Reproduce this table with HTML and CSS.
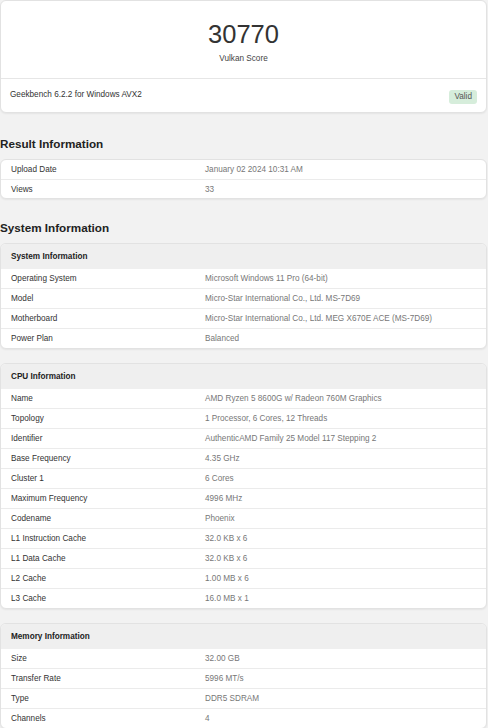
FILE: index.html
```html
<!DOCTYPE html>
<html lang="en">
<head>
<meta charset="utf-8">
<title>Geekbench Vulkan Score</title>
<link rel="stylesheet" href="styles.css">
</head>
<body>
<div class="page">
  <div class="card score-card">
    <div class="score-main">
      <div class="score">30770</div>
      <div class="score-label">Vulkan Score</div>
    </div>
    <div class="score-foot">
      <span>Geekbench 6.2.2 for Windows AVX2</span>
      <span class="badge">Valid</span>
    </div>
  </div>

  <h2 class="section-title first">Result Information</h2>
  <div class="card compact">
    <div class="row"><span class="k">Upload Date</span><span class="v">January 02 2024 10:31 AM</span></div>
    <div class="row"><span class="k">Views</span><span class="v">33</span></div>
  </div>

  <h2 class="section-title">System Information</h2>
  <div class="card">
    <div class="card-head">System Information</div>
    <div class="row"><span class="k">Operating System</span><span class="v">Microsoft Windows 11 Pro (64-bit)</span></div>
    <div class="row"><span class="k">Model</span><span class="v">Micro-Star International Co., Ltd. MS-7D69</span></div>
    <div class="row"><span class="k">Motherboard</span><span class="v">Micro-Star International Co., Ltd. MEG X670E ACE (MS-7D69)</span></div>
    <div class="row"><span class="k">Power Plan</span><span class="v">Balanced</span></div>
  </div>

  <div class="card gap">
    <div class="card-head">CPU Information</div>
    <div class="row"><span class="k">Name</span><span class="v">AMD Ryzen 5 8600G w/ Radeon 760M Graphics</span></div>
    <div class="row"><span class="k">Topology</span><span class="v">1 Processor, 6 Cores, 12 Threads</span></div>
    <div class="row"><span class="k">Identifier</span><span class="v">AuthenticAMD Family 25 Model 117 Stepping 2</span></div>
    <div class="row"><span class="k">Base Frequency</span><span class="v">4.35 GHz</span></div>
    <div class="row"><span class="k">Cluster 1</span><span class="v">6 Cores</span></div>
    <div class="row"><span class="k">Maximum Frequency</span><span class="v">4996 MHz</span></div>
    <div class="row"><span class="k">Codename</span><span class="v">Phoenix</span></div>
    <div class="row"><span class="k">L1 Instruction Cache</span><span class="v">32.0 KB x 6</span></div>
    <div class="row"><span class="k">L1 Data Cache</span><span class="v">32.0 KB x 6</span></div>
    <div class="row"><span class="k">L2 Cache</span><span class="v">1.00 MB x 6</span></div>
    <div class="row"><span class="k">L3 Cache</span><span class="v">16.0 MB x 1</span></div>
  </div>

  <div class="card gap">
    <div class="card-head">Memory Information</div>
    <div class="row"><span class="k">Size</span><span class="v">32.00 GB</span></div>
    <div class="row"><span class="k">Transfer Rate</span><span class="v">5996 MT/s</span></div>
    <div class="row"><span class="k">Type</span><span class="v">DDR5 SDRAM</span></div>
    <div class="row"><span class="k">Channels</span><span class="v">4</span></div>
  </div>
</div>
</body>
</html>
```

FILE: styles.css
```css
html, body {
  margin: 0;
  padding: 0;
  background: #f2f2f2;
}
body {
  font-family: "Liberation Sans", Arial, sans-serif;
  font-size: 8.2px;
  color: #333;
}
.page {
  padding: 0 1px 0 0;
}
.card {
  background: #fff;
  border: 1px solid #e2e2e2;
  border-radius: 6px;
  box-shadow: 0 1px 2px rgba(0, 0, 0, 0.06);
  overflow: hidden;
}
.card.gap {
  margin-top: 14px;
}
.score-main {
  height: 78px;
  display: flex;
  flex-direction: column;
  align-items: center;
  border-bottom: 1px solid #e6e6e6;
  box-sizing: border-box;
}
.score {
  font-size: 25.5px;
  line-height: 28px;
  margin-top: 19px;
  color: #333;
}
.score-label {
  margin-top: 5px;
  line-height: 12px;
  color: #444;
}
.score-foot {
  height: 33px;
  display: flex;
  align-items: center;
  justify-content: space-between;
  padding: 0 9px 0 9px;
  color: #333;
}
.score-foot > span:first-child {
  margin-top: -3px;
}
.badge {
  background: #d6eddb;
  color: #555;
  border-radius: 3px;
  padding: 3px 5px;
  line-height: 8px;
  margin-top: 3px;
}
.section-title {
  font-size: 11.7px;
  font-weight: bold;
  line-height: 14px;
  margin: 22px 0 8px 0;
  color: #222;
}
.section-title.first {
  margin-top: 24px;
}
.card-head {
  background: #efefef;
  height: 25px;
  display: flex;
  align-items: center;
  padding: 0 10px;
  font-weight: bold;
  color: #222;
}
.row {
  display: grid;
  grid-template-columns: 194px 1fr;
  align-items: center;
  height: 19px;
  padding: 0 10px;
  border-top: 1px solid #ebebeb;
}
.card-head + .row,
.card > .row:first-child {
  border-top: none;
}
.compact .row + .row {
  height: 18px;
}
.k {
  color: #333;
}
.v {
  color: #777;
}
```
